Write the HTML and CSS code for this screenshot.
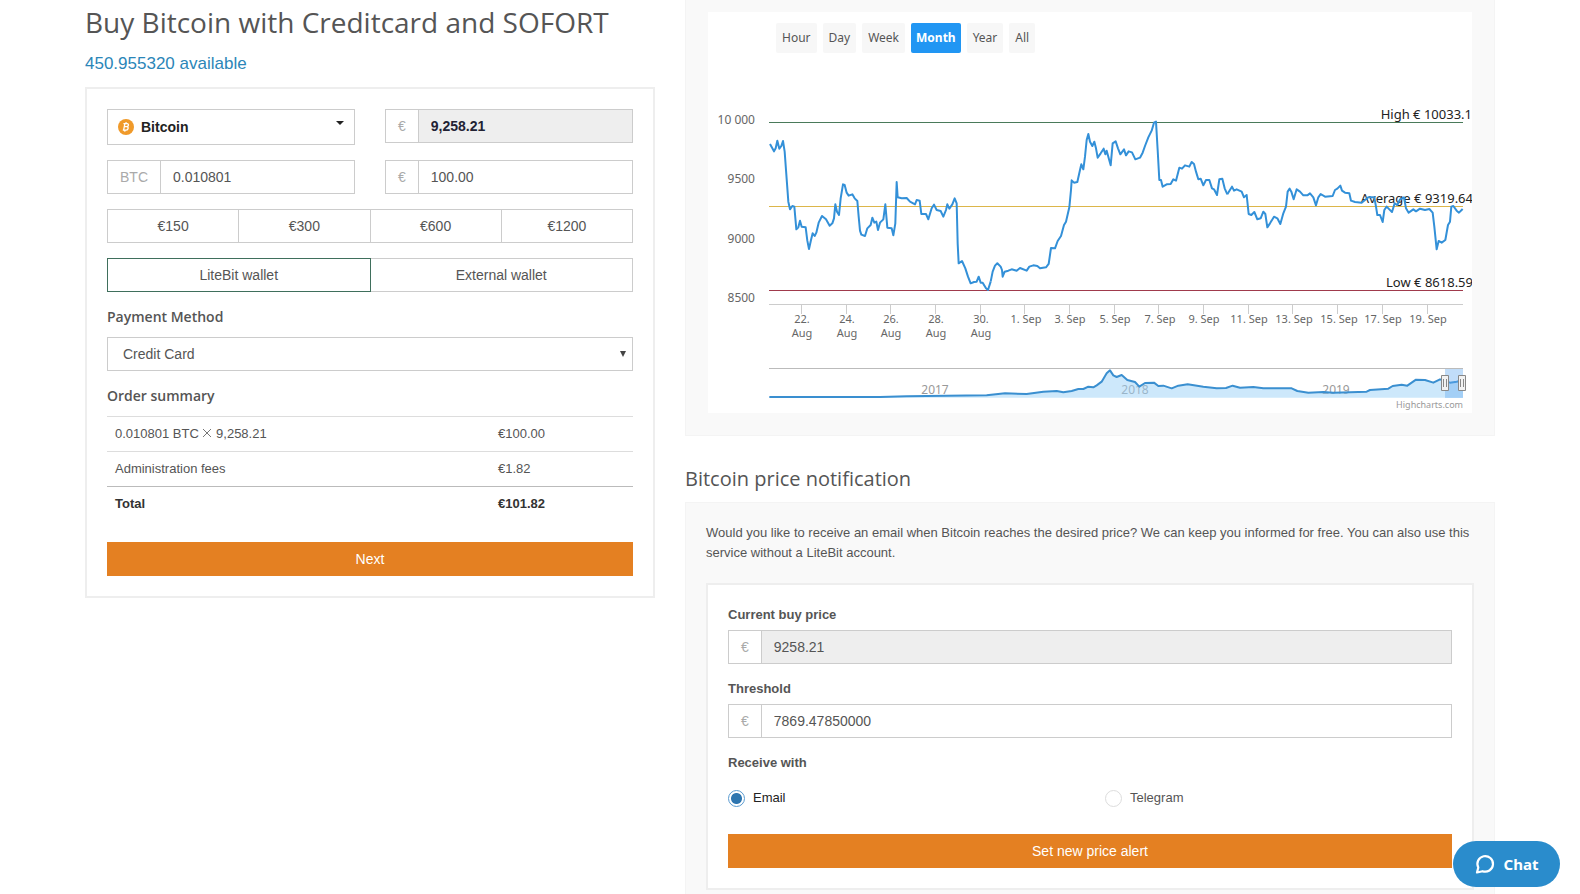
FILE: index.html
```html
<!DOCTYPE html>
<html lang="en">
<head>
<meta charset="utf-8">
<title>Buy Bitcoin</title>
<link rel="stylesheet" href="styles.css">
</head>
<body>
<main class="container">
  <section class="col">
    <h1 class="title">Buy Bitcoin with Creditcard and SOFORT</h1>
    <p class="available">450.955320 available</p>
    <form class="card order">
      <div class="pair">
        <button type="button" class="coin-select">
          <svg class="coin" viewBox="0 0 16 16" aria-hidden="true"><circle cx="8" cy="8" r="8" fill="#f09a2a"/><path d="M7 4.2 5.6 11.2M5.4 4.6h3.7c2 0 1.7 2.9-.4 3.1H6.8h2c2.100 0 1.600 3.300-.6 3.400H4.800M8.200 3.200l-.3 1.400M7 11.200l-.3 1.500" fill="none" stroke="#fff" stroke-width="1.300"/></svg>
          <span>Bitcoin</span>
          <svg class="caret" viewBox="0 0 8 4" aria-hidden="true"><path d="M0 0h8L4 4z" fill="#222"/></svg>
        </button>
        <div class="group"><label class="addon" for="rate">€</label><input class="field strong" id="rate" value="9,258.21" readonly></div>
      </div>
      <div class="pair">
        <div class="group"><label class="addon" for="btc">BTC</label><input class="field" id="btc" value="0.010801"></div>
        <div class="group"><label class="addon" for="eur">€</label><input class="field" id="eur" value="100.00"></div>
      </div>
      <div class="segments">
        <button type="button">€150</button><button type="button">€300</button><button type="button">€600</button><button type="button">€1200</button>
      </div>
      <div class="segments wallets">
        <button type="button" class="selected">LiteBit wallet</button><button type="button">External wallet</button>
      </div>
      <label class="subhead" for="method">Payment Method</label>
      <div class="select-wrap">
        <select id="method"><option>Credit Card</option></select>
        <svg class="arrow" viewBox="0 0 6 6" aria-hidden="true"><path d="M0 0h6L3 6z" fill="#444"/></svg>
      </div>
      <h2 class="subhead">Order summary</h2>
      <table class="summary">
        <tbody>
          <tr><td>0.010801 BTC <svg class="times" viewBox="0 0 10 10" role="img" aria-label="times"><path d="M1 1l8 8M9 1 1 9" stroke="#777" fill="none"/></svg> 9,258.21</td><td>€100.00</td></tr>
          <tr><td>Administration fees</td><td>€1.82</td></tr>
          <tr class="total"><th scope="row">Total</th><td>€101.82</td></tr>
        </tbody>
      </table>
      <button type="button" class="primary">Next</button>
    </form>
  </section>

  <section class="col">
    <div class="panel chart-panel">
      <div class="chart">
        <div class="ranges">
          <button type="button">Hour</button><button type="button">Day</button><button type="button">Week</button><button type="button" class="active">Month</button><button type="button">Year</button><button type="button">All</button>
        </div>
        <svg class="plot" viewBox="708 53 764 360" role="img" aria-label="Bitcoin price, last month">
          <g class="axis">
            <path d="M769 304.500H1463M801.500 304v10M846.500 304v10M890.500 304v10M935.500 304v10M980.500 304v10M1024.500 304v10M1069.500 304v10M1114.500 304v10M1158.500 304v10M1203.500 304v10M1248.500 304v10M1292.500 304v10M1337.500 304v10M1382.500 304v10M1427.500 304v10"/>
          </g>
          <g class="ylabels">
            <text x="755" y="124">10 000</text><text x="755" y="183">9500</text><text x="755" y="243">9000</text><text x="755" y="302">8500</text>
          </g>
          <path d="M769 122.500H1463" stroke="#4a7a5a"/>
          <path d="M769 206.500H1463" stroke="#dcb64a"/>
          <path d="M769 290.500H1463" stroke="#a03a4c"/>
          <g class="plotlabels">
            <text x="1472" y="119">High € 10033.1</text><text x="1473" y="203">Average € 9319.64</text><text x="1473" y="287">Low € 8618.59</text>
          </g>
          <g class="series" transform="translate(760 110) scale(.33333)">
            <polyline points="30,102 42,124 47,115 52,92 58,116 64,108 69,93 74,125 78,180 85,275 90,298 97,288 103,290 109,358 115,352 120,332 125,350 137,352 142,392 147,417 153,390 158,370 164,378 169,368 176,338 186,318 198,328 209,347 217,340 222,325 226,283 231,305 237,315 242,265 249,223 254,225 260,248 266,257 277,253 284,265 292,273 296,320 300,362 304,374 315,378 322,355 332,345 337,323 343,338 349,335 354,360 360,338 370,328 376,283 382,353 395,355 400,376 406,340 410,216 413,262 425,265 440,264 450,275 465,283 470,270 479,272 484,312 498,312 505,328 515,295 522,284 530,300 542,303 550,320 558,300 562,283 568,296 577,283 584,265 590,280 593,400 596,460 606,453 616,475 624,500 632,520 642,516 650,515 656,500 662,518 668,518 678,535 684,540 692,515"/>
            <polyline transform="translate(690 0)" points="2,515 8,485 15,467 22,460 32,470 36,480 38,500 44,485 55,482 65,478 80,482 90,474 110,482 118,470 130,466 142,468 150,475 168,472 176,462 183,414 195,415 203,393 213,378 222,345 228,335 238,292 243,240 245,211 252,218 262,216 270,180 274,163 280,178 285,140 290,90 295,72 300,95 307,108 313,95 318,115 323,143 332,130 341,116 346,133 350,122 362,166 368,100 377,94 384,115 391,133 402,118 408,136 416,124 426,127 436,148 450,143 458,128 465,108 475,82 485,62 492,38 498,35 503,120 508,210 513,210 518,230 530,223 542,222 550,208 558,212 568,173 576,176 585,166 598,170 605,156 612,162 618,185 625,208 632,206 640,226 648,210 658,210 666,235 672,238 681,255 688,208 697,206 704,235 712,253"/>
            <polyline transform="translate(1380 0)" points="22,253 28,243 36,230 42,242 50,238 65,245 72,262 80,255 86,312 94,315 103,306 112,328 122,325 130,305 136,312 142,352 150,340 162,320 172,325 181,342 190,310 198,290 203,245 209,236 214,245 221,268 230,238 240,245 250,256 262,256 270,250 280,262 288,286 295,262 302,252 315,260 338,258 345,240 352,236 361,227 366,242 375,248 388,250 393,272 405,276 425,278 435,270 445,262 455,262 463,262 468,290 472,315 480,315 488,336 493,300 500,290 508,298 516,306 524,280 532,285 540,268 552,262 558,295 566,308 580,298 588,304 600,296 615,300 628,297 638,308 643,350 650,418 656,393 665,398 676,390 684,345 690,335 694,290 700,288 710,302 717,308 728,297"/>
          </g>
          <g class="xlabels">
            <text x="802" y="323">22.</text><text x="802" y="337">Aug</text>
            <text x="847" y="323">24.</text><text x="847" y="337">Aug</text>
            <text x="891" y="323">26.</text><text x="891" y="337">Aug</text>
            <text x="936" y="323">28.</text><text x="936" y="337">Aug</text>
            <text x="981" y="323">30.</text><text x="981" y="337">Aug</text>
            <text x="1026" y="323">1. Sep</text><text x="1070" y="323">3. Sep</text><text x="1115" y="323">5. Sep</text><text x="1160" y="323">7. Sep</text><text x="1204" y="323">9. Sep</text><text x="1249" y="323">11. Sep</text><text x="1294" y="323">13. Sep</text><text x="1339" y="323">15. Sep</text><text x="1383" y="323">17. Sep</text><text x="1428" y="323">19. Sep</text>
          </g>
          <g class="years">
            <text x="935" y="394">2017</text><text x="1135" y="394">2018</text><text x="1336" y="394">2019</text>
          </g>
          <path d="M769 368.500H1463" stroke="#bbb"/>
          <g class="navigator" transform="translate(700 280) scale(.33333)">
            <path d="M208 351 540 351 620 349 860 346 915 340 980 342 1030 335 1070 333 1090 337 1115 333 1135 327 1150 327 1165 320 1180 322 1190 316 1205 305 1220 280 1230 271 1240 286 1250 291 1265 285 1282 300 1305 306 1318 320 1335 309 1362 308 1375 318 1390 317 1415 325 1435 317 1463 313 1510 320 1550 325 1578 324 1598 317 1620 323 1660 321 1690 325 1775 325 1792 333 1825 338 1870 336 1900 338 2000 335 2010 330 2065 326 2078 318 2105 314 2122 317 2135 308 2148 299 2175 300 2200 308 2220 298 2250 308 2270 305 2289 300V353H208z" class="area"/>
            <path d="M208 351 540 351 620 349 860 346 915 340 980 342 1030 335 1070 333 1090 337 1115 333 1135 327 1150 327 1165 320 1180 322 1190 316 1205 305 1220 280 1230 271 1240 286 1250 291 1265 285 1282 300 1305 306 1318 320 1335 309 1362 308 1375 318 1390 317 1415 325 1435 317 1463 313 1510 320 1550 325 1578 324 1598 317 1620 323 1660 321 1690 325 1775 325 1792 333 1825 338 1870 336 1900 338 2000 335 2010 330 2065 326 2078 318 2105 314 2122 317 2135 308 2148 299 2175 300 2200 308 2220 298 2250 308 2270 305 2289 300" class="line"/>
          </g>
          <rect x="1445" y="369" width="18" height="29" fill="#64aaf0" fill-opacity=".4"/>
          <g fill="#f2f2f2" stroke="#888">
            <path d="M1441.500 375.500h7v15h-7zM1443.500 379v8M1446.500 379v8M1458.500 375.500h7v15h-7zM1460.500 379v8M1463.500 379v8"/>
          </g>
          <text class="credit" x="1463" y="408">Highcharts.com</text>
        </svg>
      </div>
    </div>

    <h2 class="section-title">Bitcoin price notification</h2>
    <div class="panel notify">
      <p class="intro">Would you like to receive an email when Bitcoin reaches the desired price? We can keep you informed for free. You can also use this service without a LiteBit account.</p>
      <form class="card alert">
        <label class="label" for="current">Current buy price</label>
        <div class="group"><span class="addon">€</span><input class="field" id="current" value="9258.21" readonly></div>
        <label class="label" for="threshold">Threshold</label>
        <div class="group"><span class="addon">€</span><input class="field" id="threshold" value="7869.47850000"></div>
        <fieldset class="receive">
          <legend class="label">Receive with</legend>
          <div class="options">
            <label class="option chosen"><input type="radio" name="via" checked>Email</label>
            <label class="option"><input type="radio" name="via">Telegram</label>
          </div>
        </fieldset>
        <button type="button" class="primary">Set new price alert</button>
      </form>
    </div>
  </section>
</main>
<button type="button" class="chat">
  <svg viewBox="0 0 20 20" aria-hidden="true"><path d="M2 18.500 3.300 13.500A7.800 7.800 0 1 1 7.500 17.200z" fill="none" stroke="#fff" stroke-width="2.200" stroke-linejoin="round"/></svg>
  <span>Chat</span>
</button>
</body>
</html>
```

FILE: styles.css
```css
* { box-sizing: border-box; }

body {
  margin: 0;
  background: #fff;
  color: #555;
  font: 13px/20px "Liberation Sans", Arial, sans-serif;
}

h1, h2, p, form, fieldset { margin: 0; }

button, input, select { font: inherit; color: inherit; border-radius: 0; }

.container {
  display: grid;
  grid-template-columns: 5fr 7fr;
  padding: 0 70px;
}

.col { padding: 0 15px; min-width: 0; }

.title {
  padding-top: 3px;
  font: 400 28px/38px "Open Sans", sans-serif;
}

.available {
  padding: 12px 0;
  color: #2b86b8;
  font-size: 17px;
  line-height: 22px;
}

.card { background: #fff; border: 2px solid #eee; }

.order {
  padding: 20px;
  font-size: 14px;
}

.pair {
  display: grid;
  grid-template-columns: minmax(0, 1fr) minmax(0, 1fr);
  align-items: start;
  gap: 30px;
  margin-bottom: 15px;
}

.coin-select {
  display: flex;
  align-items: center;
  gap: 7px;
  height: 36px;
  padding: 0 10px;
  border: 1px solid #ccc;
  background: #fff;
  color: #222;
  font-weight: 700;
}

.coin { width: 16px; height: 16px; }
.caret { width: 8px; height: 4px; margin: 0 0 8px auto; }

.group {
  display: flex;
  height: 34px;
  border: 1px solid #ccc;
  background: #fff;
  font-size: 14px;
}

.addon {
  padding: 0 12px;
  border-right: 1px solid #ccc;
  color: #aaa;
  line-height: 32px;
}

.field {
  flex: 1;
  min-width: 0;
  padding: 0 12px;
  border: 0;
  background: #fff;
}

.field:read-only { background: #eee; }
.strong { color: #223; font-weight: 700; }

.segments { display: flex; margin-bottom: 15px; }

.segments button {
  flex: 1;
  height: 34px;
  padding: 0;
  border: 1px solid #ccc;
  background: #fff;
}

.segments button + button { border-left: 0; }
.segments .selected { border-color: #3f6f5c; }

.subhead {
  display: block;
  margin-bottom: 10px;
  font: 600 14px/20px "Open Sans", sans-serif;
}

.select-wrap { position: relative; margin-bottom: 15px; }

.select-wrap select {
  display: block;
  width: 100%;
  height: 34px;
  padding: 0 15px;
  border: 1px solid #ccc;
  background: #fff;
  appearance: none;
}

.arrow {
  position: absolute;
  top: 14px;
  right: 7px;
  width: 6px;
  height: 6px;
}

.summary {
  width: 100%;
  margin-bottom: 20px;
  border-collapse: collapse;
  font-size: 13px;
}

.summary td, .summary th {
  height: 35px;
  padding: 0 8px;
  border-top: 1px solid #ddd;
  text-align: left;
}

.summary td:last-child { width: 143px; }
.total td, .total th { border-top-color: #bbb; color: #333; font-weight: 700; }
.times { width: 10px; height: 10px; }

.primary {
  display: block;
  width: 100%;
  height: 34px;
  border: 0;
  background: #e48022;
  color: #fff;
  font-size: 14px;
}

.panel {
  background: #f9f9f9;
  border: 1px solid #f4f4f4;
}

.chart-panel { padding: 12px 22px 22px; border-top: 0; }
.chart { background: #fff; }

.ranges {
  display: flex;
  gap: 6px;
  padding: 11px 0 0 68px;
}

.ranges button {
  height: 30px;
  padding: 0 6px;
  border: 0;
  border-radius: 2px;
  background: #f7f7f7;
  font: 12px/30px "Noto Sans", sans-serif;
}

.ranges .active {
  padding: 0 5px;
  background: #2196f3;
  color: #fff;
  font-weight: 700;
}

.plot {
  display: block;
  width: 100%;
  font-family: "Noto Sans", sans-serif;
}

.axis path { stroke: #ccc; }
.ylabels { fill: #666; font-size: 12px; text-anchor: end; }
.plotlabels { fill: #222; font-size: 13px; text-anchor: end; }
.xlabels { fill: #666; font-size: 11px; text-anchor: middle; }
.years { fill: #999; font-size: 12px; text-anchor: middle; }
.credit { fill: #999; font-size: 9px; text-anchor: end; }
.series { fill: none; stroke: #3390d8; stroke-width: 6; stroke-linejoin: round; }
.area { fill: #9cd2f8; fill-opacity: .5; }
.line { fill: none; stroke: #3a8fd0; stroke-width: 6; stroke-linejoin: round; }

.section-title {
  padding: 28px 0 8px;
  font: 400 20px/30px "Open Sans", sans-serif;
}

.notify { padding: 20px 20px 4px; }
.intro { margin-bottom: 20px; }
.alert { padding: 20px; }
.label {
  display: block;
  padding: 0;
  margin-bottom: 5px;
  font-weight: 700;
}

.alert .group { margin-bottom: 15px; }
.receive { padding: 0; border: 0; }

.options {
  display: grid;
  grid-template-columns: 1fr 1fr;
  gap: 30px;
  padding: 10px 0 26px;
}

.option { display: flex; align-items: center; gap: 8px; }
.chosen { color: #222; }

.option input {
  appearance: none;
  width: 17px;
  height: 17px;
  margin: 0;
  border: 1px solid #ddd;
  border-radius: 50%;
  background: #fff;
}

.option input:checked {
  border-color: #5a9bd0;
  background: radial-gradient(circle, #2e76b0 5px, #fff 6px);
}

.chat {
  position: fixed;
  right: 20px;
  bottom: 7px;
  display: flex;
  align-items: center;
  justify-content: center;
  gap: 9px;
  width: 107px;
  height: 46px;
  border: 0;
  border-radius: 23px;
  background: #2a8ccc;
  color: #fff;
  font: 700 15px/20px "Noto Sans", sans-serif;
}

.chat svg { width: 20px; height: 20px; }
```
